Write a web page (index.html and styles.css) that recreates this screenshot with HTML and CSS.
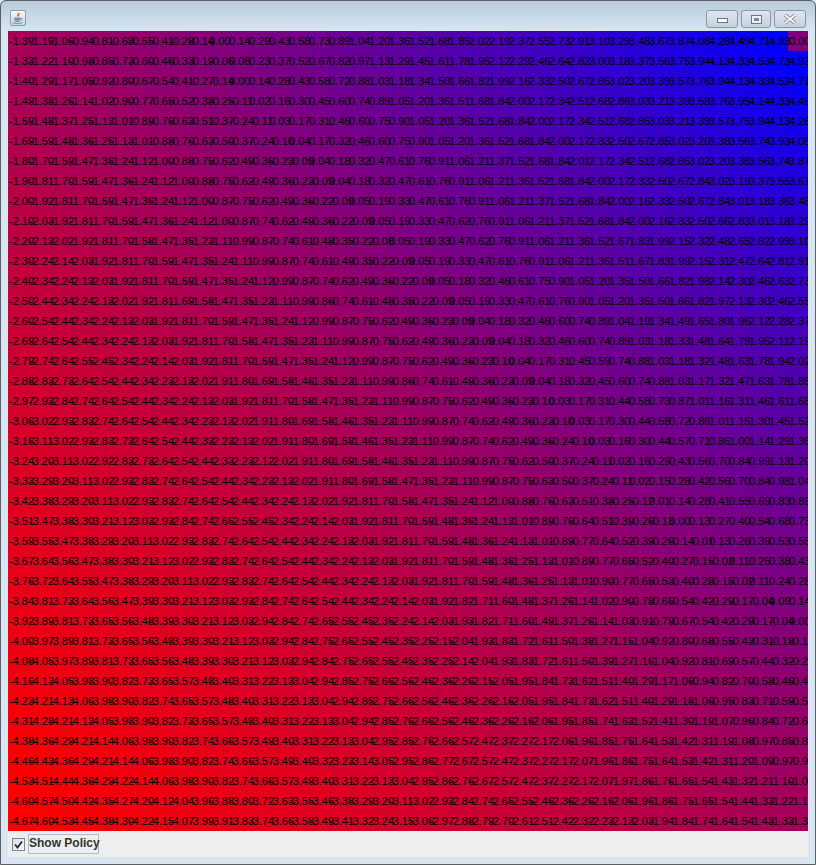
FILE: index.html
```html
<!DOCTYPE html>
<html lang="en">
<head>
    <meta charset="UTF-8">
    <title>Value Function</title>
    <link rel="stylesheet" href="styles.css">
</head>
<body>
    <div class="window">
        <div class="titlebar">
            <div class="app-icon">
                <svg width="14" height="14" viewBox="0 0 14 14">
                    <path d="M7.5 0.5c1 1.5-2 2.5-1.5 4 .2.7.8 1.2 1 1.7-.1-1 2.200-2 1.500-3.500-.2-.6-.6-1.500-1-2.200z" fill="#e2701c"/>
                    <path d="M9.500 2.500c-1 .9-2 1.500-1.600 2.700" stroke="#e8913c" stroke-width=".7" fill="none"/>
                    <path d="M3 7.200h6.500M3.300 8.700h5.900M4 10.200h4.500" stroke="#4a6f96" stroke-width="1" fill="none"/>
                    <path d="M9.500 7.400c2-.6 2.600 1.400.4 2.200" stroke="#4a6f96" stroke-width=".8" fill="none"/>
                    <path d="M1.500 11.600c2.500 1.200 7.500 1.200 10 0" stroke="#6f8fb0" stroke-width="1" fill="none"/>
                </svg>
            </div>
            <div class="window-buttons">
                <div class="win-btn"><span class="glyph-min"></span></div>
                <div class="win-btn win-btn-mid"><span class="glyph-max"></span></div>
                <div class="win-btn">
                    <svg width="16" height="12" viewBox="0 0 16 12">
                        <path d="M3 2l10 8M13 2l-10 8" stroke="#6d7680" stroke-width="3.400" fill="none"/>
                        <path d="M3 2l10 8M13 2l-10 8" stroke="#fff" stroke-width="1.800" fill="none"/>
                    </svg>
                </div>
            </div>
        </div>
        <div id="grid" class="grid"></div>
        <div class="controls">
            <span class="checkbox">
                <svg width="11" height="11" viewBox="0 0 11 11">
                    <path d="M2 5.500l2.500 3L9 2.500" stroke="#1c2530" stroke-width="1.800" fill="none"/>
                </svg>
            </span>
            <label class="show-label">Show Policy</label>
        </div>
    </div>
    <script src="app.js"></script>
</body>
</html>
```

FILE: styles.css
```css
html, body {
    margin: 0;
    height: 100%;
}
body {
    background-color: #d9e6f2;
    font-family: "Liberation Sans", Arial, sans-serif;
}
.window {
    box-sizing: border-box;
    width: 816px;
    height: 865px;
    padding: 0 7px 6px 7px;
    border: 1px solid #5b5f63;
    border-radius: 6px 6px 0 0;
    background: linear-gradient(to bottom, #b8cadb 0, #d8e6f2 30px, #d9e6f2 100%);
}
.titlebar {
    display: flex;
    align-items: flex-start;
    height: 30px;
    box-sizing: border-box;
    padding-top: 9px;
}
.app-icon {
    box-sizing: border-box;
    width: 16px;
    height: 16px;
    margin-left: 2px;
    border: 1px solid #8d9dac;
    border-radius: 2px;
    background: linear-gradient(to bottom, #f4f7fa, #c9d5e0);
    display: flex;
    align-items: center;
    justify-content: center;
}
.window-buttons {
    display: flex;
    gap: 3px;
    margin-left: auto;
    margin-right: 2px;
}
.win-btn {
    box-sizing: border-box;
    width: 32px;
    height: 18px;
    border: 1px solid #8997a6;
    border-radius: 3px;
    background: linear-gradient(to bottom, #dfe7ef, #c3d0dc);
    display: flex;
    align-items: center;
    justify-content: center;
}
.win-btn-mid {
    width: 30px;
}
.glyph-min {
    box-sizing: border-box;
    width: 11px;
    height: 5px;
    margin-top: 3px;
    border: 1px solid #6d7680;
    background-color: #fff;
}
.glyph-max {
    box-sizing: border-box;
    width: 11px;
    height: 9px;
    border: 1px solid #6d7680;
    background-color: #7d8791;
    box-shadow: inset 0 0 0 2px #eef3f7;
}
.grid {
    display: grid;
    grid-template-columns: repeat(40, 20px);
    grid-auto-rows: 20px;
    width: 800px;
    height: 800px;
    overflow: hidden;
    font-size: 11px;
    color: #000;
}
.cell {
    line-height: 21px;
    padding-left: 1px;
    white-space: nowrap;
}
/* keeps the text above the next cell's background */
.cell span {
    position: relative;
    z-index: 1;
}
.controls {
    display: flex;
    align-items: center;
    height: 26px;
    padding-left: 4px;
    background-color: #eeeeee;
}
.checkbox {
    box-sizing: border-box;
    width: 13px;
    height: 13px;
    border: 1px solid #7189a6;
    background: linear-gradient(135deg, #d5dfe9, #fbfcfd);
    display: flex;
    align-items: center;
    justify-content: center;
}
.show-label {
    box-sizing: border-box;
    height: 20px;
    margin-left: 3px;
    width: 71px;
    border: 1px solid #a7bfd4;
    font-size: 12px;
    font-weight: bold;
    line-height: 17px;
    color: #333;
    white-space: nowrap;
}
```

FILE: app.js
```js
// values read off the first row and four columns, the rest is interpolated per row
const firstRow = [-1.39, -1.19, -1.06, -0.94, -0.81, -0.68, -0.55, -0.41, -0.28, -0.14,
    0.00, 0.14, 0.29, 0.43, 0.58, 0.73, 0.89, 1.04, 1.20, 1.36,
    1.52, 1.68, 1.85, 2.02, 2.19, 2.37, 2.55, 2.73, 2.91, 3.10,
    3.29, 3.48, 3.67, 3.87, 4.08, 4.28, 4.49, 4.71, 4.93, 0.00];
const col0 = [-1.39, -1.33, -1.40, -1.49, -1.59, -1.69, -1.80, -1.90, -2.00, -2.10,
    -2.20, -2.30, -2.40, -2.50, -2.60, -2.69, -2.79, -2.88, -2.97, -3.06,
    -3.16, -3.24, -3.33, -3.42, -3.51, -3.59, -3.67, -3.76, -3.84, -3.92,
    -4.00, -4.08, -4.16, -4.23, -4.31, -4.38, -4.46, -4.53, -4.60, -4.67];
const col1 = [-1.19, -1.22, -1.29, -1.38, -1.48, -1.59, -1.70, -1.81, -1.92, -2.03,
    -2.13, -2.24, -2.34, -2.44, -2.54, -2.64, -2.74, -2.83, -2.93, -3.02,
    -3.11, -3.20, -3.29, -3.38, -3.47, -3.55, -3.64, -3.72, -3.81, -3.89,
    -3.97, -4.05, -4.13, -4.21, -4.28, -4.36, -4.43, -4.51, -4.57, -4.60];
const col20 = [1.52, 1.45, 1.34, 1.20, 1.05, 0.90, 0.76, 0.61, 0.47, 0.33,
    0.19, 0.05, -0.09, -0.22, -0.36, -0.49, -0.62, -0.74, -0.87, -0.99,
    -1.11, -1.23, -1.35, -1.47, -1.59, -1.70, -1.81, -1.92, -2.03, -2.14,
    -2.25, -2.35, -2.46, -2.56, -2.66, -2.76, -2.86, -2.95, -3.02, -3.06];
const col38 = [4.93, 4.73, 4.52, 4.33, 4.13, 3.93, 3.74, 3.55, 3.36, 3.18,
    2.99, 2.81, 2.63, 2.46, 2.28, 2.11, 1.94, 1.78, 1.61, 1.45,
    1.29, 1.13, 0.98, 0.83, 0.68, 0.53, 0.38, 0.24, 0.09, -0.04,
    -0.18, -0.32, -0.46, -0.59, -0.72, -0.85, -0.97, -1.10, -1.22, -1.33];
const col39 = [0.00, 4.93, 4.71, 4.49, 4.28, 4.08, 3.87, 3.67, 3.48, 3.29,
    3.10, 2.91, 2.73, 2.55, 2.37, 2.19, 2.02, 1.85, 1.68, 1.52,
    1.36, 1.20, 1.04, 0.89, 0.73, 0.58, 0.43, 0.28, 0.14, 0.00,
    -0.14, -0.28, -0.41, -0.55, -0.68, -0.81, -0.94, -1.06, -1.19, -1.30];

const MIN_VALUE = -4.67;
const MAX_VALUE = 4.93;

function valueAt(r, c) {
    if (r === 0) return firstRow[c];
    if (c === 0) return col0[r];
    if (c === 39) return col39[r];
    // quadratic through columns 1, 20 and 38
    const a = col1[r] * (c - 20) * (c - 38) / ((1 - 20) * (1 - 38));
    const b = col20[r] * (c - 1) * (c - 38) / ((20 - 1) * (20 - 38));
    const d = col38[r] * (c - 1) * (c - 20) / ((38 - 1) * (38 - 20));
    return a + b + d;
}

function colorFor(v) {
    const t = Math.min(1, Math.max(0, (v - MIN_VALUE) / (MAX_VALUE - MIN_VALUE)));
    return 'rgb(' + Math.round(255 * (1 - t)) + ',0,' + Math.round(255 * t) + ')';
}

const grid = document.getElementById('grid');
for (let r = 0; r < 40; r++) {
    for (let c = 0; c < 40; c++) {
        const v = valueAt(r, c);
        const cell = document.createElement('div');
        cell.className = 'cell';
        cell.style.backgroundColor = colorFor(v);
        const text = document.createElement('span');
        text.textContent = v.toFixed(2).replace(/^-0\.00$/, '0.00');
        cell.appendChild(text);
        grid.appendChild(cell);
    }
}
```
